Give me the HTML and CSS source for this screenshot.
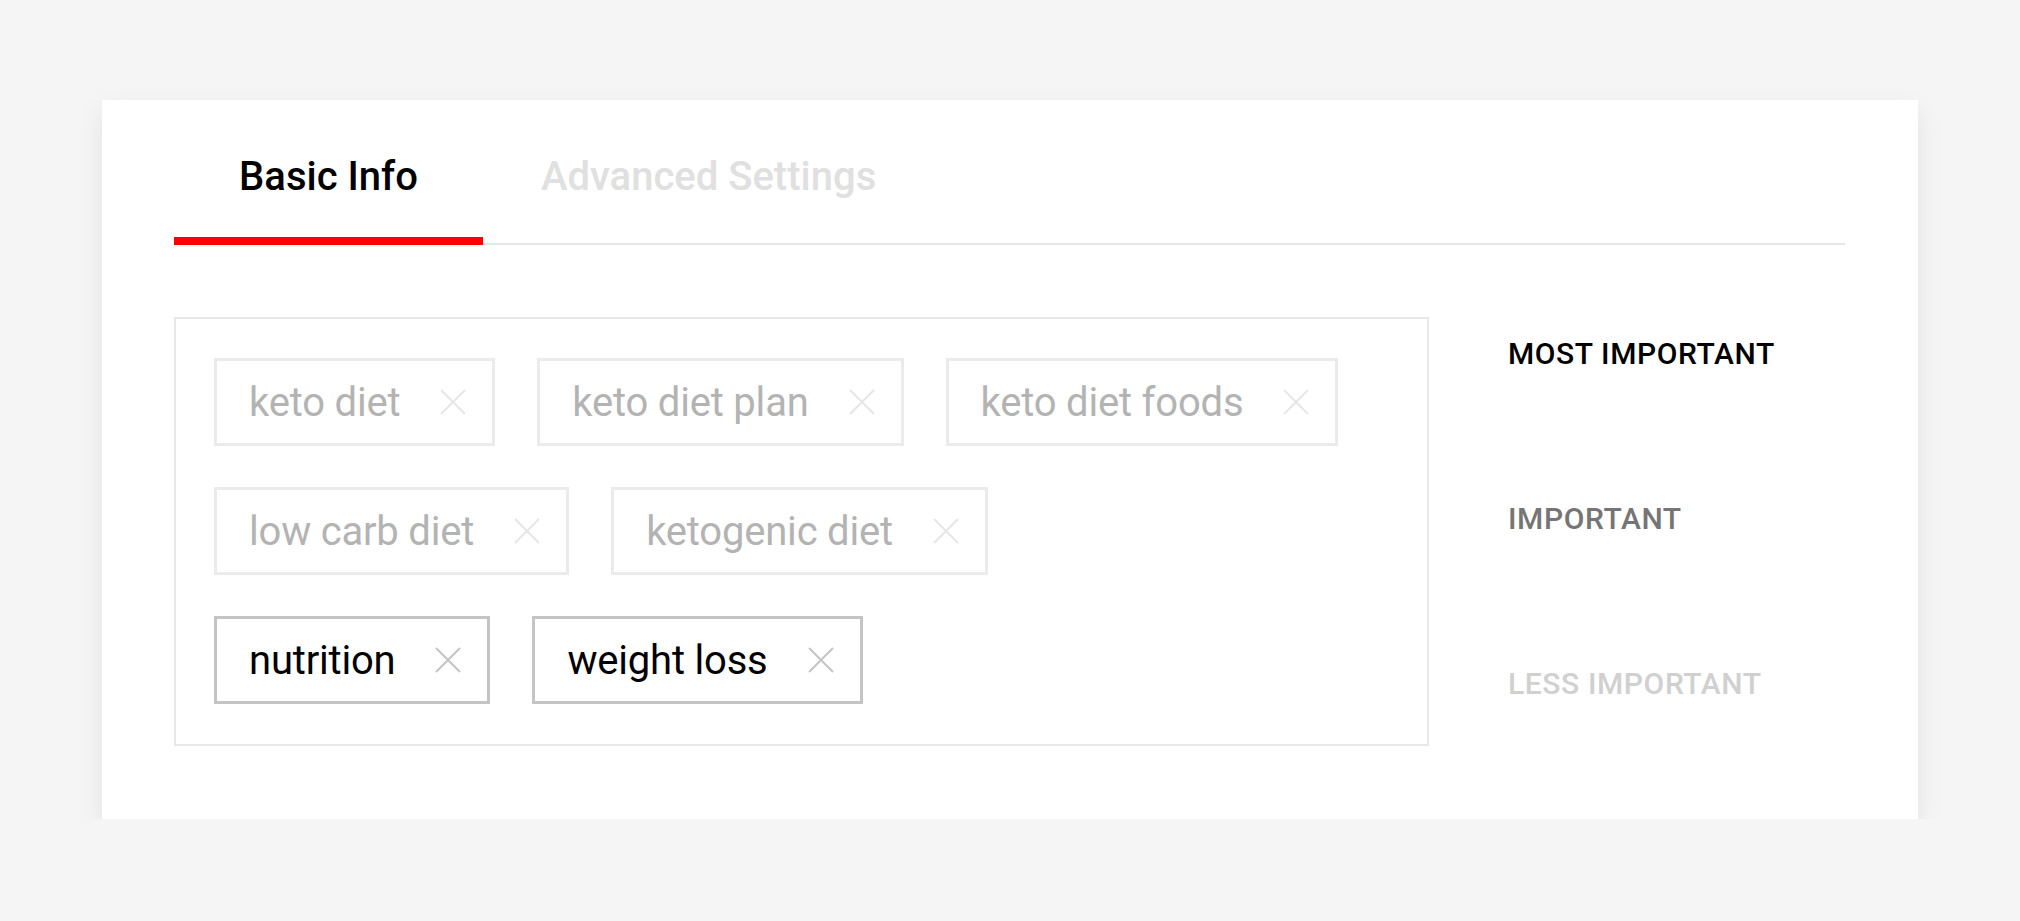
FILE: index.html
```html
<!DOCTYPE html>
<html lang="en">

<head>
    <meta charset="UTF-8">
    <meta name="viewport" content="width=device-width, initial-scale=1.0">
    <title>Keywords</title>
    <link rel="stylesheet" href="styles.css">
</head>

<body>
    <div class="card">
        <div class="tabs">
            <div class="tab active">Basic Info</div>
            <div class="tab">Advanced Settings</div>
        </div>
        <div class="main">
            <div class="tag_box">
                <div class="row">
                    <span class="tag">keto diet<svg viewBox="0 0 26 26"><path d="M1 1L25 25M25 1L1 25" /></svg></span>
                    <span class="tag">keto diet plan<svg viewBox="0 0 26 26"><path d="M1 1L25 25M25 1L1 25" /></svg></span>
                    <span class="tag">keto diet foods<svg viewBox="0 0 26 26"><path d="M1 1L25 25M25 1L1 25" /></svg></span>
                </div>
                <div class="row">
                    <span class="tag">low carb diet<svg viewBox="0 0 26 26"><path d="M1 1L25 25M25 1L1 25" /></svg></span>
                    <span class="tag">ketogenic diet<svg viewBox="0 0 26 26"><path d="M1 1L25 25M25 1L1 25" /></svg></span>
                </div>
                <div class="row dark">
                    <span class="tag">nutrition<svg viewBox="0 0 26 26"><path d="M1 1L25 25M25 1L1 25" /></svg></span>
                    <span class="tag">weight loss<svg viewBox="0 0 26 26"><path d="M1 1L25 25M25 1L1 25" /></svg></span>
                </div>
            </div>
            <div class="levels">
                <div class="level most">MOST IMPORTANT</div>
                <div class="level mid">IMPORTANT</div>
                <div class="level less">LESS IMPORTANT</div>
            </div>
        </div>
    </div>
</body>

</html>
```

FILE: styles.css
```css
* {
    margin: 0;
    padding: 0;
    box-sizing: border-box;
}

body {
    background: #f5f5f5;
    font-family: Roboto, "Noto Sans", sans-serif;
    padding-top: 100px;
}

.card {
    width: 1816px;
    margin: 0 auto;
    background: #fff;
    padding: 53px 73px 73px 72px;
    box-shadow: 0 10px 24px rgba(0, 0, 0, 0.08);
}

.tabs {
    display: flex;
    border-bottom: 2px solid #e6e6e6;
}

.tab {
    min-width: 309px;
    padding: 0 58px 36px;
    margin-bottom: -2px;
    border-bottom: 8px solid transparent;
    text-align: center;
    font-size: 40px;
    line-height: 48px;
    font-weight: 500;
    color: #e0e0e0;
}

.tab.active {
    color: #000;
    border-bottom-color: #ff0000;
}

.main {
    display: flex;
    margin-top: 72px;
}

.tag_box {
    width: 1255px;
    border: 2px solid #e8e8e8;
    padding: 39px 38px 40px;
    display: flex;
    flex-direction: column;
    gap: 41px;
}

.row {
    display: flex;
    gap: 42px;
}

.tag {
    height: 88px;
    display: flex;
    align-items: center;
    padding: 0 26px 0 32px;
    border: 3px solid #ebebeb;
    font-size: 40px;
    letter-spacing: -0.2px;
    color: #b3b3b3;
}

.tag svg {
    width: 26px;
    height: 26px;
    margin-left: 40px;
    fill: none;
    stroke: #e6e6e6;
    stroke-width: 2;
}

.row.dark .tag {
    border-color: #c4c4c4;
    color: #000;
}

.row.dark .tag svg {
    stroke: #c4c4c4;
}

.levels {
    margin-left: 79px;
    padding-top: 22px;
    display: flex;
    flex-direction: column;
    gap: 135px;
}

.level {
    font-size: 30px;
    line-height: 30px;
    font-weight: 500;
    letter-spacing: 0.6px;
}

.most {
    color: #000;
}

.mid {
    color: #757575;
}

.less {
    color: #d0d0d0;
}
```
